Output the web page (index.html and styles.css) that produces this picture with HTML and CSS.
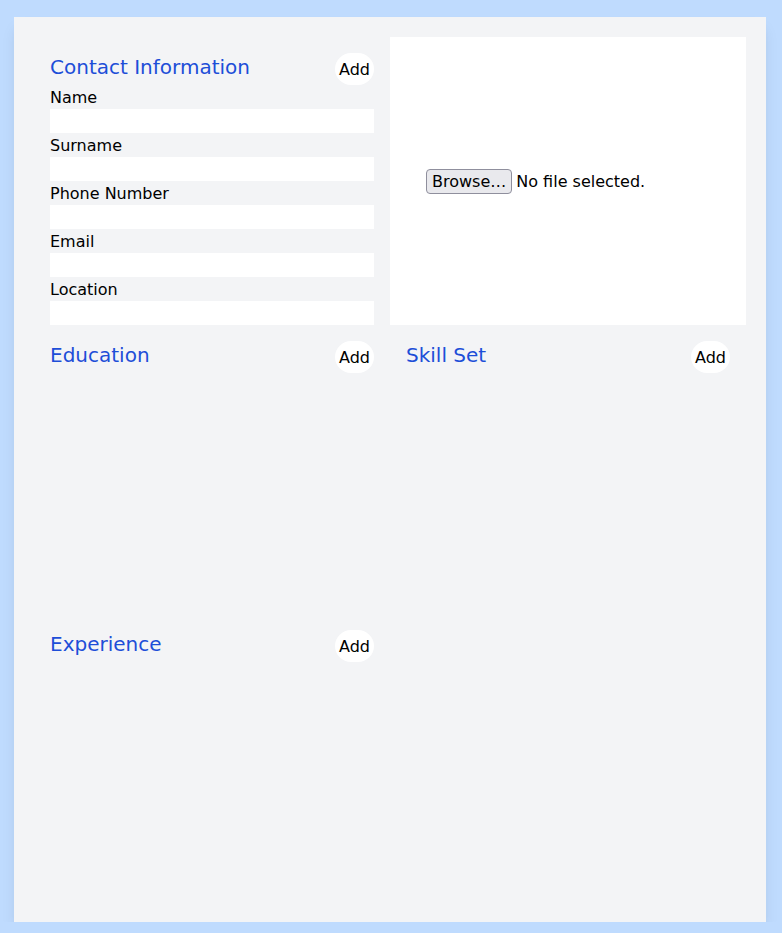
FILE: index.html
```html
<!DOCTYPE html>
<html lang="en">
<head>
	<meta charset="UTF-8">
	<title>CV Builder</title>
	<link rel="stylesheet" href="styles.css">
</head>

<body>
<div class="resume">
	<section class="block contact">
		<div class="block-head">
			<h2>Contact Information</h2>
			<button class="add">Add</button>
		</div>
		<label>Name</label>
		<input type="text">
		<label>Surname</label>
		<input type="text">
		<label>Phone Number</label>
		<input type="text">
		<label>Email</label>
		<input type="text">
		<label>Location</label>
		<input type="text">
	</section>
	<section class="photo">
		<div class="file">
			<span class="file-btn">Browse…</span>
			<span class="file-name">No file selected.</span>
		</div>
	</section>
	<section class="block">
		<div class="block-head">
			<h2>Education</h2>
			<button class="add">Add</button>
		</div>
	</section>
	<section class="block">
		<div class="block-head">
			<h2>Skill Set</h2>
			<button class="add">Add</button>
		</div>
	</section>
	<section class="block">
		<div class="block-head">
			<h2>Experience</h2>
			<button class="add">Add</button>
		</div>
	</section>
</div>
</body>
</html>
```

FILE: styles.css
```css
html, body {
	margin: 0;
	padding: 0;
	background: #bfdbfe;
	font-family: "DejaVu Sans", sans-serif;
	font-size: 16px;
	line-height: 24px;
	color: #000;
}
.resume {
	box-sizing: border-box;
	width: 752px;
	height: 905px;
	margin: 17px 0 0 14px;
	padding: 20px;
	background: #f3f4f6;
	box-shadow: 0 10px 15px -3px rgba(0, 0, 0, .1), 0 4px 6px -4px rgba(0, 0, 0, .1);
	display: grid;
	grid-template-columns: 1fr 1fr;
	grid-template-rows: repeat(3, minmax(0, 1fr));
}
.block {
	padding: 16px;
	min-width: 0;
}
.contact {
	padding-bottom: 0;
	display: flex;
	flex-direction: column;
}
.block-head {
	display: flex;
	justify-content: space-between;
	align-items: flex-start;
}
.block-head h2 {
	margin: 0;
	font-size: 20px;
	line-height: 28px;
	font-weight: normal;
	color: #1d4ed8;
}
.add {
	background: #fff;
	border: none;
	border-radius: 9999px;
	padding: 5px 4px 3px;
	font-family: inherit;
	font-size: 16px;
	line-height: 24px;
	color: #000;
}
.contact label {
	display: block;
	padding-top: 2px;
	line-height: 22px;
}
.contact input {
	display: block;
	box-sizing: border-box;
	width: 100%;
	height: 24px;
	border: none;
	padding: 0;
	background: #fff;
}
.photo {
	background: #fff;
	display: flex;
	align-items: center;
	padding-left: 36px;
}
.file {
	display: flex;
	align-items: center;
	gap: 4px;
}
.file-btn {
	box-sizing: border-box;
	height: 25px;
	padding: 2px 5px;
	line-height: 19px;
	background: #e9e9ed;
	border: 1px solid #8f8f9d;
	border-radius: 4px;
}
.file-name {
	padding-top: 2px;
}
```
